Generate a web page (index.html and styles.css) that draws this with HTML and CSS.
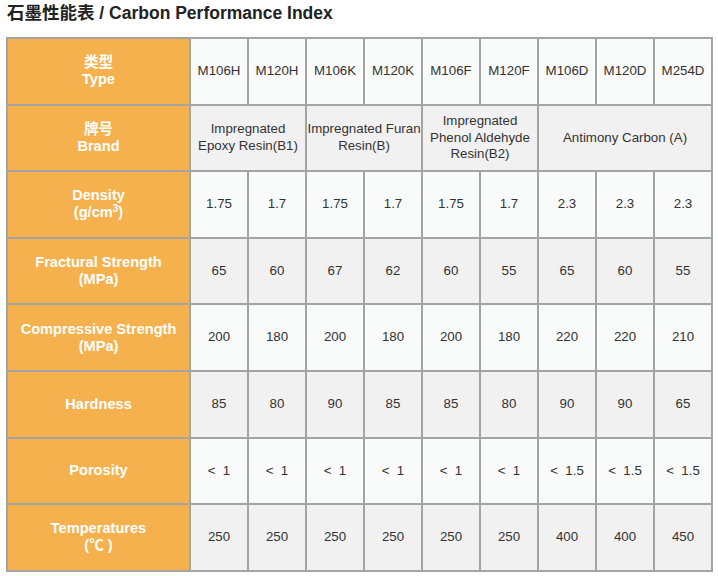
FILE: index.html
```html
<!DOCTYPE html>
<html>
<head>
<meta charset="utf-8">
<link rel="stylesheet" href="styles.css">
</head>
<body>
<h1 class="title">石墨性能表 / Carbon Performance Index</h1>
<table class="perf">
  <colgroup>
    <col class="c-head">
    <col><col><col><col><col><col><col><col><col>
  </colgroup>
  <tr class="light">
    <th>类型<br>Type</th>
    <td>M106H</td><td>M120H</td><td>M106K</td><td>M120K</td><td>M106F</td><td>M120F</td><td>M106D</td><td>M120D</td><td>M254D</td>
  </tr>
  <tr class="grey">
    <th>牌号<br>Brand</th>
    <td colspan="2">Impregnated<br>Epoxy Resin(B1)</td>
    <td colspan="2">Impregnated Furan<br>Resin(B)</td>
    <td colspan="2">Impregnated<br>Phenol Aldehyde<br>Resin(B2)</td>
    <td colspan="3">Antimony Carbon (A)</td>
  </tr>
  <tr class="light">
    <th>Density<br>(g/cm<sup>3</sup>)</th>
    <td>1.75</td><td>1.7</td><td>1.75</td><td>1.7</td><td>1.75</td><td>1.7</td><td>2.3</td><td>2.3</td><td>2.3</td>
  </tr>
  <tr class="grey">
    <th>Fractural Strength<br>(MPa)</th>
    <td>65</td><td>60</td><td>67</td><td>62</td><td>60</td><td>55</td><td>65</td><td>60</td><td>55</td>
  </tr>
  <tr class="light">
    <th>Compressive Strength<br>(MPa)</th>
    <td>200</td><td>180</td><td>200</td><td>180</td><td>200</td><td>180</td><td>220</td><td>220</td><td>210</td>
  </tr>
  <tr class="grey">
    <th>Hardness</th>
    <td>85</td><td>80</td><td>90</td><td>85</td><td>85</td><td>80</td><td>90</td><td>90</td><td>65</td>
  </tr>
  <tr class="light">
    <th>Porosity</th>
    <td>&lt;&nbsp; 1</td><td>&lt;&nbsp; 1</td><td>&lt;&nbsp; 1</td><td>&lt;&nbsp; 1</td><td>&lt;&nbsp; 1</td><td>&lt;&nbsp; 1</td><td>&lt;&nbsp; 1.5</td><td>&lt;&nbsp; 1.5</td><td>&lt;&nbsp; 1.5</td>
  </tr>
  <tr class="grey">
    <th>Temperatures<br>(℃ )</th>
    <td>250</td><td>250</td><td>250</td><td>250</td><td>250</td><td>250</td><td>400</td><td>400</td><td>450</td>
  </tr>
</table>
</body>
</html>
```
FILE: styles.css
```css
html, body {
  margin: 0;
  padding: 0;
  background: #ffffff;
}
body {
  font-family: "Liberation Sans", Arial, "Noto Sans CJK SC", sans-serif;
  color: #333333;
}
.title {
  margin: 0;
  padding: 2px 7px 0 7px;
  font-size: 17.5px;
  line-height: 22px;
  font-weight: bold;
  color: #222222;
}
.perf {
  margin: 13px 0 0 6px;
  border-collapse: collapse;
  table-layout: fixed;
  width: 707px;
  border: 2px solid #a4a4a4;
}
.c-head {
  width: 183px;
}
.perf th,
.perf td {
  border: 2px solid #a4a4a4;
  height: 64.6px;
  padding: 0;
  text-align: center;
  vertical-align: middle;
  font-size: 13.3px;
  line-height: 16.5px;
}
.perf th {
  background: #f5b14d;
  color: #ffffff;
  font-weight: bold;
  font-size: 14.6px;
  line-height: 17px;
}
.perf td {
  color: #333333;
}
.light td {
  background: #f9fafa;
}
.grey td {
  background: #f1f1f1;
}
.perf sup {
  font-size: 10px;
  line-height: 0;
  vertical-align: 5px;
}
```
